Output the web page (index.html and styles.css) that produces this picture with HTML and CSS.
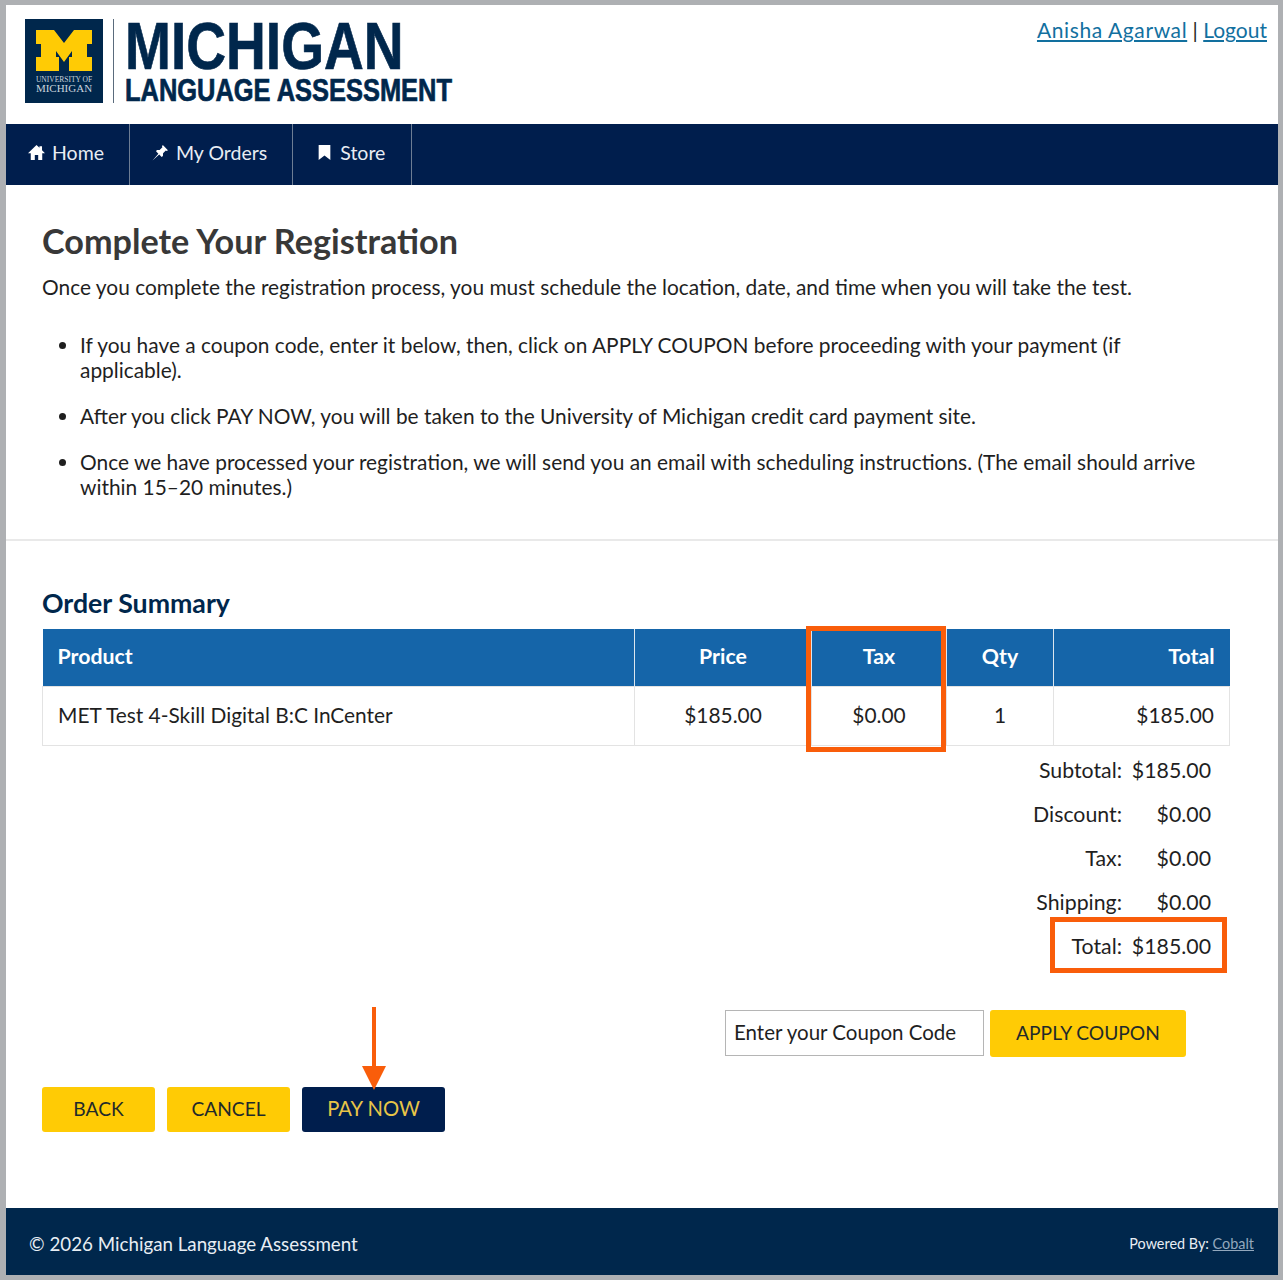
FILE: index.html
```html
<!DOCTYPE html>
<html lang="en">
<head>
<meta charset="utf-8">
<title>Complete Your Registration</title>
<link rel="stylesheet" href="styles.css">
</head>
<body>
<div class="frame">
  <header class="top">
    <div class="logo">
      <div class="seal">
        <svg class="block-m" viewBox="0 0 56 41" aria-hidden="true"><path d="M0 0H18L28 13L38 0H56V14H51V27H56V41H33V27H36V21L28 32L20 21V27H23V41H0V27H5V14H0Z"/></svg>
        <div class="seal-top">UNIVERSITY OF</div>
        <div class="seal-bottom">MICHIGAN</div>
      </div>
      <div class="logo-rule"></div>
      <div class="wordmark">
        <div class="word-main">MICHIGAN</div>
        <div class="word-sub">LANGUAGE ASSESSMENT</div>
      </div>
    </div>
    <div class="user"><a class="user-name" href="#">Anisha Agarwal</a> | <a href="#">Logout</a></div>
  </header>
  <nav class="nav">
    <a class="nav-item" href="#"><svg class="nav-icon" viewBox="0 0 16 16"><path d="M8 1L0 8.6H2.6V15H6.4V10.4H9.6V15H13.4V8.6H16L13.2 5.9V2H10.8V3.6Z"/></svg>Home</a>
    <a class="nav-item" href="#"><svg class="nav-icon" viewBox="0 0 16 16"><path d="M10.2 1L15 5.8L13.9 6.6L13 6.2L10.4 8.8L10.3 11.4L9.1 12.2L6.8 9.9L0.5 15.5L6 9.1L3.8 6.9L4.6 5.7L7.2 5.6L9.8 3L9.4 2.1Z"/></svg>My Orders</a>
    <a class="nav-item" href="#"><svg class="nav-icon" viewBox="0 0 16 16"><path d="M2.5 1H13.5V15L8 10.8L2.5 15Z"/></svg>Store</a>
  </nav>
  <main class="intro">
    <h1>Complete Your Registration</h1>
    <p class="lead">Once you complete the registration process, you must schedule the location, date, and time when you will take the test.</p>
    <ul class="notes">
      <li>If you have a coupon code, enter it below, then, click on APPLY COUPON before proceeding with your payment (if applicable).</li>
      <li>After you click PAY NOW, you will be taken to the University of Michigan credit card payment site.</li>
      <li>Once we have processed your registration, we will send you an email with scheduling instructions. (The email should arrive within 15–20 minutes.)</li>
    </ul>
  </main>
  <section class="summary">
    <h2>Order Summary</h2>
    <table class="orders">
      <thead>
        <tr><th class="c-product">Product</th><th class="c-price">Price</th><th class="c-tax">Tax</th><th class="c-qty">Qty</th><th class="c-total">Total</th></tr>
      </thead>
      <tbody>
        <tr><td class="c-product">MET Test 4-Skill Digital B:C InCenter</td><td class="c-price">$185.00</td><td class="c-tax">$0.00</td><td class="c-qty">1</td><td class="c-total">$185.00</td></tr>
      </tbody>
    </table>
    <dl class="totals">
      <dt>Subtotal:</dt><dd>$185.00</dd>
      <dt>Discount:</dt><dd>$0.00</dd>
      <dt>Tax:</dt><dd>$0.00</dd>
      <dt>Shipping:</dt><dd>$0.00</dd>
      <dt>Total:</dt><dd>$185.00</dd>
    </dl>
    <div class="coupon">
      <input class="coupon-input" type="text" value="Enter your Coupon Code" aria-label="Coupon code">
      <button class="btn btn-apply" type="button">APPLY COUPON</button>
    </div>
    <div class="actions">
      <button class="btn btn-back" type="button">BACK</button>
      <button class="btn btn-cancel" type="button">CANCEL</button>
      <button class="btn btn-pay" type="button">PAY NOW</button>
    </div>
  </section>
  <footer class="footer">
    <div>© 2026 Michigan Language Assessment</div>
    <div class="powered">Powered By: <a href="#">Cobalt</a></div>
  </footer>
  <div class="mark mark-tax"></div>
  <div class="mark mark-total"></div>
  <svg class="arrow" viewBox="0 0 26 84" aria-hidden="true"><path d="M11 0H15V59H25L13 83L1 59H11Z"/></svg>
</div>
</body>
</html>
```
FILE: styles.css
```css
* { box-sizing: border-box; }
html, body { margin: 0; padding: 0; background: #fff; }
body { font-family: Lato, "Open Sans", sans-serif; color: #1f1f1f; font-size: 20.9px; }
.frame {
  position: relative;
  width: 1283px;
  height: 1280px;
  border: solid #aeb0b3;
  border-width: 5px 5px 5px 6px;
  display: flex;
  flex-direction: column;
}
a { color: #12709f; }
.top { height: 119px; display: flex; justify-content: space-between; padding: 14px 11px 0 19px; flex: none; }
.logo { display: flex; align-items: flex-start; }
.seal { width: 78px; height: 84px; background: #00274c; display: flex; flex-direction: column; align-items: center; padding-top: 11px; font-family: "Liberation Serif", serif; color: #c9d3dc; line-height: 1; }
.block-m { width: 56px; height: 41px; fill: #ffcb05; margin-bottom: 5px; flex: none; }
.seal-top { font-size: 7.5px; }
.seal-bottom { font-size: 11px; margin-top: -1px; }
.logo-rule { width: 1px; height: 84px; background: #5a6b7c; margin: 0 11px 0 10px; }
.wordmark { font-family: "Liberation Sans", sans-serif; font-weight: 700; color: #00274c; display: flex; flex-direction: column; -webkit-text-stroke: 0.7px #00274c; white-space: nowrap; margin-top: -2px; }
.word-main { font-size: 66px; line-height: 58px; height: 58px; transform: scaleX(0.835); transform-origin: left center; }
.word-sub { font-size: 32px; line-height: 30px; transform: scaleX(0.795); transform-origin: left center; }
.user { font-size: 21px; line-height: 26px; margin-top: -2px; color: #222; }
.user-name { letter-spacing: 0.6px; }
.nav { height: 61px; background: #001e4d; display: flex; flex: none; }
.nav-item { display: flex; align-items: center; gap: 7px; color: #e8edf3; text-decoration: none; border-right: 1px solid #6d7d94; padding: 0 25px 5px 22px; font-size: 19.5px; }
.nav-item:last-child { padding: 0 26px 5px 23px; }
.nav-icon { width: 17px; height: 17px; fill: #fff; flex: none; }
.intro { flex: none; height: 356px; border-bottom: 2px solid #e9e9e9; padding: 34px 36px 0 36px; }
h1 { margin: 0; font-size: 34.2px; line-height: 44px; font-weight: 700; color: #383838; }
.lead { margin: 11px 0 0; line-height: 26px; }
.notes { margin: 32px 0 0; padding: 0 30px 0 38px; line-height: 25px; }
.notes li { margin-bottom: 21px; }
.summary { flex: 1; padding: 0 48px 0 36px; }
h2 { margin: 45px 0 0; font-size: 26.7px; line-height: 34px; font-weight: 700; color: #00274c; }
.orders { width: 1187px; margin-top: 9px; border-collapse: collapse; table-layout: fixed; }
.orders th { height: 57px; background: #1565a9; color: #fff; font-weight: 700; font-size: 21.3px; border-right: 1px solid #dbe6ef; padding: 0 15px 2px; }
.orders td { height: 59px; border: 1px solid #e3e3e3; padding: 0 15px 2px; }
.orders th:last-child { border-right: 0; }
.c-product { width: 592px; text-align: left; }
.c-price { width: 177px; text-align: center; }
.c-tax { width: 135px; text-align: center; }
.c-qty { width: 107px; text-align: center; }
.c-total { width: 176px; text-align: right; }
.totals { margin: 11px 19px 0 0; display: grid; grid-template-columns: 1fr 89px; row-gap: 18px; line-height: 26px; font-size: 21.3px; }
.totals dt { text-align: right; }
.totals dd { margin: 0; text-align: right; }
.coupon { display: flex; gap: 6px; margin: 51px 0 0 683px; align-items: flex-start; }
.coupon-input { width: 259px; height: 46px; border: 1px solid #b5b5b5; padding: 0 8px 2px; font: inherit; font-size: 20.5px; color: #1f1f1f; border-radius: 0; }
.btn { border: 0; border-radius: 3px; font: inherit; font-size: 19.2px; height: 45px; background: #ffcb05; color: #1f2a2a; padding: 0 0 2px; }
.btn-apply { width: 196px; height: 47px; }
.actions { display: flex; gap: 12px; margin-top: 30px; }
.btn-back { width: 113px; }
.btn-cancel { width: 123px; }
.btn-pay { width: 143px; background: #001e4d; color: #e8c547; font-size: 20.2px; }
.footer { height: 67px; flex: none; background: #00274c; color: #e8eef4; display: flex; justify-content: space-between; align-items: center; padding: 3px 24px 0 23px; font-size: 18.75px; }
.powered { font-size: 14.4px; }
.powered a { color: #93a8bd; }
.mark { position: absolute; border: 5px solid #f95d0a; }
.mark-tax { left: 800px; top: 621px; width: 140px; height: 126px; }
.mark-total { left: 1044px; top: 912px; width: 177px; height: 56px; }
.arrow { position: absolute; left: 355px; top: 1002px; width: 26px; height: 84px; fill: #f95d0a; }
```
